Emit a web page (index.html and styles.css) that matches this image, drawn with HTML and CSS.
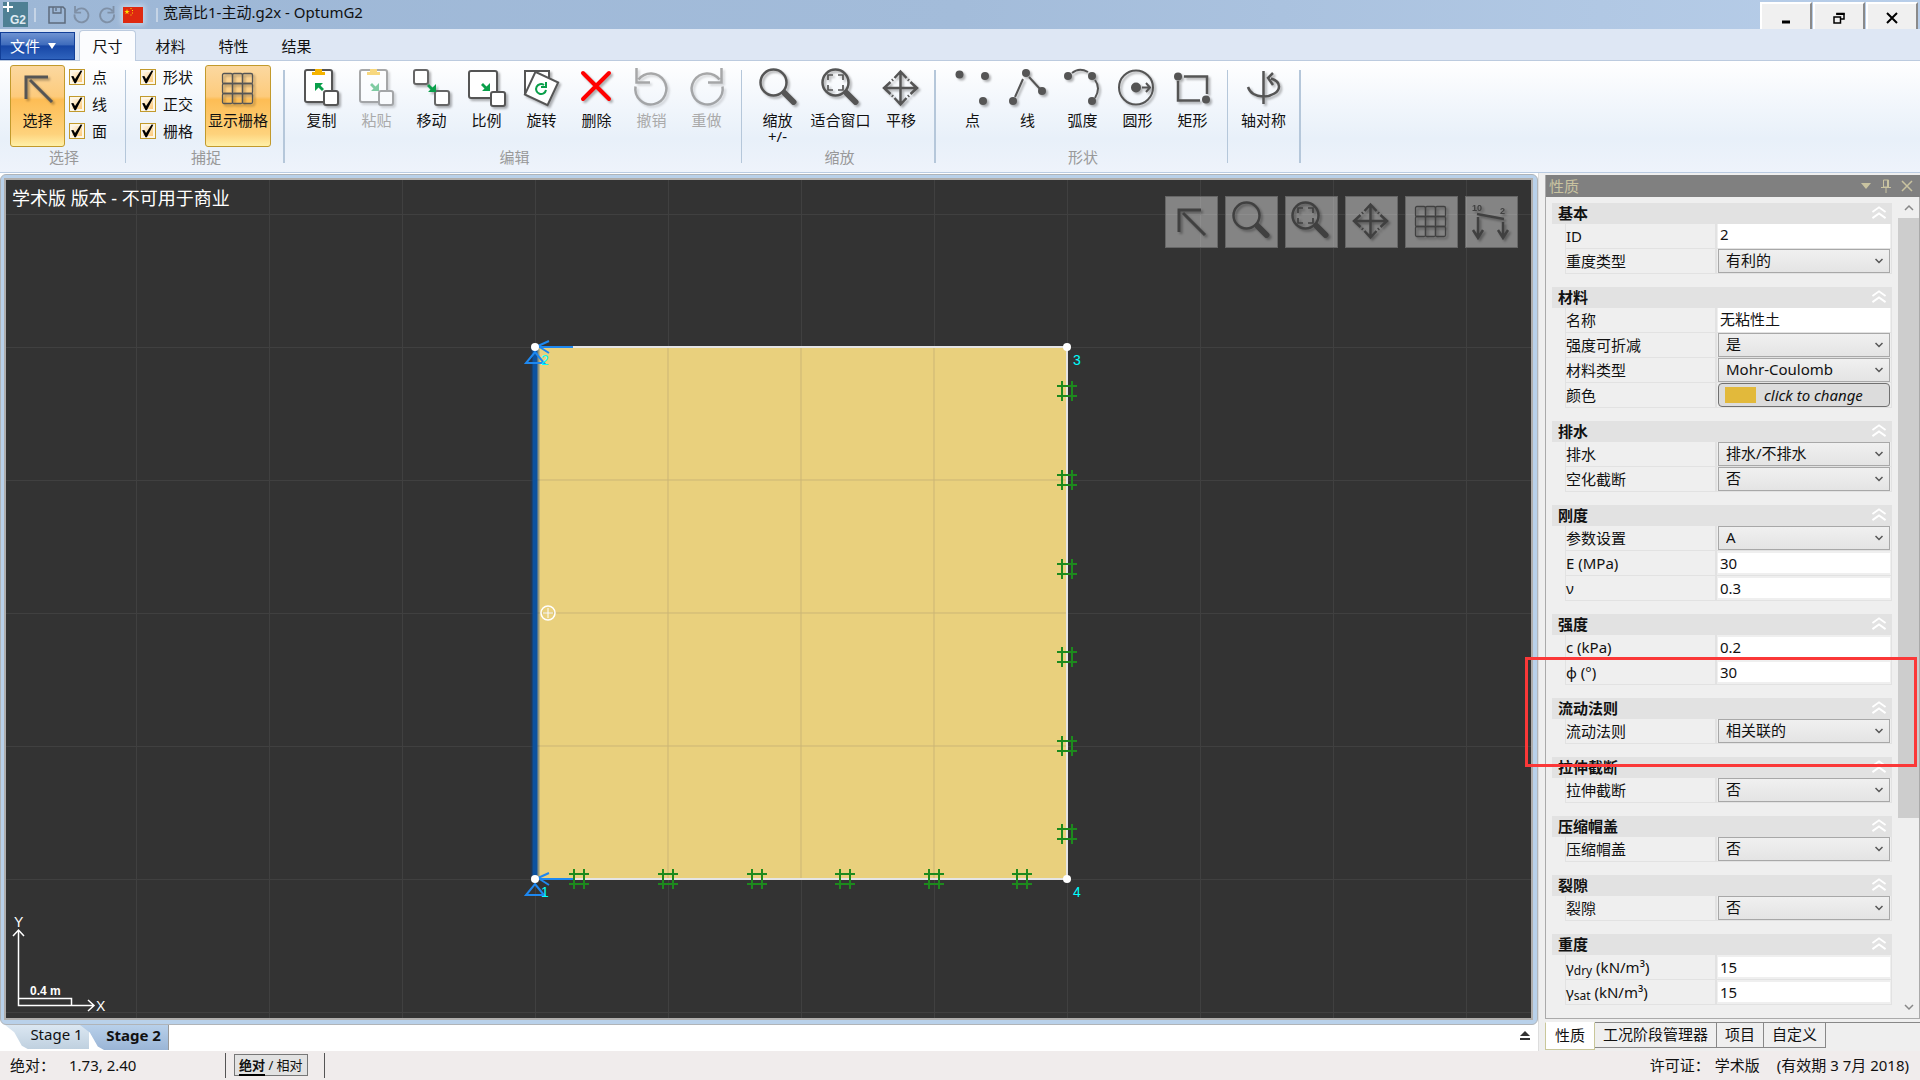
FILE: index.html
```html
<!DOCTYPE html>
<html lang="zh-CN">
<head>
<meta charset="utf-8">
<title>宽高比1-主动.g2x - OptumG2</title>
<link rel="stylesheet" href="styles.css">
</head>
<body>
<svg class="defs" aria-hidden="true">
  <symbol id="i-arrow" viewBox="0 0 40 40"><path d="M8 31V9h22M12 12l22 22" fill="none" stroke="currentColor" stroke-width="3"/></symbol>
  <symbol id="i-grid" viewBox="0 0 40 40"><g fill="none" stroke="currentColor" stroke-width="1.300"><rect x="4.500" y="5.500" width="10" height="10" rx="1.500"/><rect x="14.500" y="5.500" width="10" height="10" rx="1.500"/><rect x="24.500" y="5.500" width="10" height="10" rx="1.500"/><rect x="4.500" y="15.500" width="10" height="10" rx="1.500"/><rect x="14.500" y="15.500" width="10" height="10" rx="1.500"/><rect x="24.500" y="15.500" width="10" height="10" rx="1.500"/><rect x="4.500" y="25.500" width="10" height="10" rx="1.500"/><rect x="14.500" y="25.500" width="10" height="10" rx="1.500"/><rect x="24.500" y="25.500" width="10" height="10" rx="1.500"/></g></symbol>
  <symbol id="i-undo" viewBox="0 0 40 40"><path class="turn" d="M4.500 0v14.500H18M6.500 11.500A15.500 15.500 0 1 1 3.500 18.500"/></symbol>
  <symbol id="i-redo" viewBox="0 0 40 40"><path class="turn" d="M34.500 0v14.500H21M32.500 11.500A15.500 15.500 0 1 0 35.500 18.500"/></symbol>
  <symbol id="i-zoom" viewBox="0 0 40 40"><circle cx="15.500" cy="14.500" r="13" fill="none" stroke="currentColor" stroke-width="2.500"/><path d="M26.500 25l9 9" stroke="currentColor" stroke-width="6" stroke-linecap="round"/></symbol>
  <symbol id="i-fit" viewBox="0 0 40 40"><circle cx="14.500" cy="14.500" r="13" fill="none" stroke="currentColor" stroke-width="2.500"/><path d="M25.500 25l9 9" stroke="currentColor" stroke-width="6" stroke-linecap="round"/><path d="M7 12V7h5M17 7h5v5M22 17v5h-5M12 22H7v-5" fill="none" stroke="currentColor" stroke-width="1.700"/></symbol>
  <symbol id="i-pan" viewBox="0 0 40 40"><path d="M19.500 4v32M3.500 20h32M13.500 10l6-6.500 6 6.500M13.500 30l6 6.500 6-6.500M9.500 14l-6.500 6 6.500 6M29.500 14l6.500 6-6.500 6M11 12.500l1-1M28 12.500l-1-1M11 27.500l1 1M28 27.500l-1 1" fill="none" stroke="currentColor" stroke-width="2.500"/></symbol>
  <symbol id="i-up" viewBox="0 0 16 16"><path d="M1 7.500l7-5 7 5M1 14l7-5 7 5" fill="none" stroke="#fff" stroke-width="2"/></symbol>
  <symbol id="i-down" viewBox="0 0 8 6"><path d="M.5 1L4 4.500 7.500 1" fill="none" stroke="#555" stroke-width="1.500"/></symbol>
</svg>

<div class="app">
  <header class="titlebar">
    <svg class="logo" width="25" height="25" viewBox="0 0 25 25"><rect width="25" height="25" fill="#4f8094"/><path d="M0 5h10M5 0v10" stroke="#fff" stroke-width="2"/><text x="7" y="22" class="logo-text">G2</text></svg>
    <span class="tick"></span>
    <div class="quick">
      <button aria-label="保存"><svg width="18" height="18" viewBox="0 0 18 18" fill="none" stroke="#5d6b7c"><path d="M1 1h14l2 2v14H1z" stroke-width="1.500"/><path d="M5 1v6h8V1M8 2v3" stroke-width="1.300"/></svg></button>
      <button aria-label="撤销"><svg class="mini" width="18" height="18"><use href="#i-undo"/></svg></button>
      <button aria-label="重做"><svg class="mini" width="18" height="18"><use href="#i-redo"/></svg></button>
      <button aria-label="语言" class="flag"><svg width="20" height="16" viewBox="0 0 20 16"><rect width="20" height="16" fill="#de2910"/><path d="M4 2l.7 2h2L5 5.200l.7 2L4 6 2.300 7.200l.7-2L1.300 4h2z" fill="#ffde00"/><path d="M7.500 1.500h1M9 3.500h1M9 6h1M7.500 8h1" stroke="#ffde00"/></svg></button>
    </div>
    <span class="tick"></span>
    <h1>宽高比1-主动.g2x - OptumG2</h1>
    <div class="winbtns">
      <button aria-label="最小化"><svg width="12" height="12"><path d="M2 10h8" stroke="#000" stroke-width="3"/></svg></button>
      <button aria-label="还原"><svg width="12" height="12" fill="none" stroke="#000"><path d="M4 3V1.500h7V7H8" stroke-width="1.500"/><path d="M3.500 2h8" stroke-width="2"/><rect x="1" y="5" width="6.500" height="6" stroke-width="1.500"/></svg></button>
      <button aria-label="关闭"><svg width="12" height="12"><path d="M1 1l10 10M11 1L1 11" stroke="#000" stroke-width="2"/></svg></button>
    </div>
  </header>

  <nav class="tabs">
    <button class="file">文件<svg width="8" height="6"><path d="M0 0h8L4 6z" fill="#fff"/></svg></button>
    <button class="tab active">尺寸</button>
    <button class="tab">材料</button>
    <button class="tab">特性</button>
    <button class="tab">结果</button>
  </nav>

  <div class="ribbon">
    <section class="group g-select">
      <div class="tools">
        <button class="tool on"><svg class="ic"><use href="#i-arrow"/></svg>选择</button>
        <div class="checks">
          <label><input type="checkbox" checked>点</label>
          <label><input type="checkbox" checked>线</label>
          <label><input type="checkbox" checked>面</label>
        </div>
      </div>
      <h2>选择</h2>
    </section>
    <span class="sep"></span>
    <section class="group g-snap">
      <div class="tools">
        <div class="checks">
          <label><input type="checkbox" checked>形状</label>
          <label><input type="checkbox" checked>正交</label>
          <label><input type="checkbox" checked>栅格</label>
        </div>
        <button class="tool wide on"><svg class="ic"><use href="#i-grid"/></svg>显示栅格</button>
      </div>
      <h2>捕捉</h2>
    </section>
    <span class="sep thick"></span>
    <section class="group g-edit">
      <div class="tools">
        <button class="tool"><svg class="ic" viewBox="0 0 40 40"><rect x="3" y="2" width="27" height="32" rx="2" fill="#fff" stroke="#555" stroke-width="2"/><path d="M13 1h7v3h3v3H10V4h3z" fill="#f5b400"/><path d="M13 15h8l-2.500 2.500 3.500 3.500-2 2-3.500-3.500L13 23z" fill="#0a9f4a"/><rect x="22" y="23" width="14" height="14" rx="2" fill="#fff" stroke="#555" stroke-width="2"/></svg>复制</button>
        <button class="tool" disabled><svg class="ic" viewBox="0 0 40 40"><rect x="3" y="2" width="27" height="32" rx="2" fill="#fff" stroke="#555" stroke-width="2"/><path d="M13 1h7v3h3v3H10V4h3z" fill="#f5b400"/><path d="M22 23h-8l2.500-2.500L13 17l2-2 3.500 3.500L22 15z" fill="#0a9f4a"/><rect x="22" y="23" width="14" height="14" rx="2" fill="#fff" stroke="#555" stroke-width="2"/></svg>粘贴</button>
        <button class="tool"><svg class="ic" viewBox="0 0 40 40"><g fill="#fff" stroke="#666" stroke-width="2"><rect x="2" y="2" width="14" height="14" rx="2"/><rect x="23" y="23" width="14" height="14" rx="2"/></g><path d="M24 24h-8l2.500-2.500L15 18l2-2 3.500 3.500L24 16z" fill="#0a9f4a"/></svg>移动</button>
        <button class="tool"><svg class="ic" viewBox="0 0 40 40"><g fill="#fff" stroke="#555" stroke-width="2"><rect x="2" y="3" width="28" height="27" rx="2"/><rect x="24" y="24" width="14" height="14" rx="2"/></g><path d="M23 23h-8l2.500-2.500L14 17l2-2 3.500 3.500L23 15z" fill="#0a9f4a"/></svg>比例</button>
        <button class="tool"><svg class="ic" viewBox="0 0 40 40"><g fill="#fff" stroke="#555" stroke-width="2"><rect x="3" y="3" width="24" height="22"/><rect x="7" y="8" width="25" height="25" transform="rotate(25 19.500 20.500)"/></g><path d="M22 17a5 5 0 1 0 2 5M24 14v5h-5" fill="none" stroke="#0a9f4a" stroke-width="2"/></svg>旋转</button>
        <button class="tool"><svg class="ic" viewBox="0 0 40 40"><path d="M6 5l26 26M32 5L6 31" stroke="#f00" stroke-width="4" stroke-linecap="round"/></svg>删除</button>
        <button class="tool" disabled><svg class="ic"><use href="#i-undo"/></svg>撤销</button>
        <button class="tool" disabled><svg class="ic"><use href="#i-redo"/></svg>重做</button>
      </div>
      <h2>编辑</h2>
    </section>
    <span class="sep"></span>
    <section class="group g-zoom">
      <div class="tools">
        <button class="tool mid"><svg class="ic"><use href="#i-zoom"/></svg><span>缩放</span><span>+/-</span></button>
        <button class="tool wide"><svg class="ic"><use href="#i-fit"/></svg>适合窗口</button>
        <button class="tool"><svg class="ic"><use href="#i-pan"/></svg>平移</button>
      </div>
      <h2>缩放</h2>
    </section>
    <span class="sep thick"></span>
    <section class="group g-shape">
      <div class="tools">
        <button class="tool"><svg class="ic" viewBox="0 0 40 40" fill="currentColor"><circle cx="6.500" cy="6.500" r="4"/><circle cx="32" cy="8" r="4"/><circle cx="30" cy="33" r="4"/></svg>点</button>
        <button class="tool"><svg class="ic" viewBox="0 0 40 40" fill="currentColor"><circle cx="18" cy="5" r="4"/><circle cx="5" cy="33" r="4"/><circle cx="34" cy="23" r="4"/><path d="M15 11L7 29M21 9l11 12" stroke="currentColor" stroke-width="2"/></svg>线</button>
        <button class="tool"><svg class="ic" viewBox="0 0 40 40" fill="currentColor"><circle cx="5" cy="8" r="4"/><circle cx="29" cy="8" r="4"/><circle cx="29" cy="33" r="4"/><path d="M9 5Q16-1 25 4M32 12q6 8 0 18" fill="none" stroke="currentColor" stroke-width="2"/></svg>弧度</button>
        <button class="tool"><svg class="ic" viewBox="0 0 40 40"><circle cx="18" cy="19.500" r="17" fill="none" stroke="currentColor" stroke-width="2"/><circle cx="18" cy="19.500" r="5" fill="currentColor"/><path d="M24 19.500h8M28 15l4 4.500-4 4.500" fill="none" stroke="currentColor" stroke-width="2"/></svg>圆形</button>
        <button class="tool"><svg class="ic" viewBox="0 0 40 40"><path d="M11 8.500h23V26M27 32.500H5V13" fill="none" stroke="currentColor" stroke-width="2.500"/><g fill="currentColor"><circle cx="5" cy="8.500" r="4"/><circle cx="33" cy="31.500" r="4"/></g></svg>矩形</button>
      </div>
      <h2>形状</h2>
    </section>
    <span class="sep"></span>
    <section class="group g-axis">
      <div class="tools">
        <button class="tool"><svg class="ic" viewBox="0 0 40 40"><path d="M19.500 3v33M4 19c2 6 8 9.500 15 9.500 9 0 16-4.500 16-10 0-4-3-6.500-8-8M29 5l-5 5 5 7" fill="none" stroke="currentColor" stroke-width="2.500"/></svg>轴对称</button>
      </div>
    </section>
    <span class="sep thick"></span>
  </div>

  <main class="work">
    <div class="left">
      <div class="frame">
        <div class="canvas">
          <svg class="model" width="100%" height="100%">
            <defs>
              <pattern id="grid" width="133" height="133" patternUnits="userSpaceOnUse" x="529" y="167"><path d="M0 .5h133M.5 0v133" stroke="#404040"/></pattern>
              <g id="hash"><path d="M-10-5h20M-10 5h20M-5-10v20M5-10v20" stroke="#1d8a1d" stroke-width="2"/></g>
              <g id="support" fill="none" stroke="#1e88f0" stroke-width="2"><path d="M0 5l9 11H-9z"/><path d="M4 0h34" /><path d="M14-6L3-1l11 7"/></g>
            </defs>
            <rect width="100%" height="100%" fill="url(#grid)"/>
            <g transform="translate(529 167)">
              <rect width="532" height="532" fill="#e9d07d"/>
              <path d="M133 0v532M266 0v532M399 0v532M0 133h532M0 266h532M0 399h532" stroke="#cbb577"/>
              <path d="M0 0h532v532H0" fill="none" stroke="#e4e4e4" stroke-width="2"/>
              <path d="M0 0v532" stroke="#0b3c7c" stroke-opacity=".4" stroke-width="9"/>
              <path d="M0 0v532" stroke="#0c529f" stroke-width="5"/>
              <use href="#hash" x="44" y="532"/><use href="#hash" x="133" y="532"/><use href="#hash" x="222" y="532"/><use href="#hash" x="310" y="532"/><use href="#hash" x="399" y="532"/><use href="#hash" x="487" y="532"/>
              <use href="#hash" x="532" y="44"/><use href="#hash" x="532" y="133"/><use href="#hash" x="532" y="222"/><use href="#hash" x="532" y="310"/><use href="#hash" x="532" y="399"/><use href="#hash" x="532" y="487"/>
              <use href="#support"/><use href="#support" y="532"/>
              <g fill="#fff"><circle r="4"/><circle cx="532" r="4"/><circle cy="532" r="4"/><circle cx="532" cy="532" r="4"/></g>
              <g class="node"><text x="6" y="18">2</text><text x="6" y="550">1</text><text x="538" y="18">3</text><text x="538" y="550">4</text></g>
              <g fill="none" stroke="#fff" stroke-width="1.500"><circle cx="13" cy="266" r="7"/><path d="M8 266h10M13 261v10" stroke-width="1"/></g>
            </g>
          </svg>
          <p class="licence">学术版 版本 - 不可用于商业</p>
          <svg class="axes" width="112" height="104" fill="none" stroke="#fff">
            <path d="M12.500 18v74.500H88M7 23l5.500-6 5.500 6M82 87l6 5.500-6 5.500" stroke-width="1.500"/>
            <path d="M12 85.500h53.500V92" stroke-width="1.500"/>
            <g class="axis-text"><text x="8" y="14">Y</text><text x="90" y="98">X</text><text class="scale" x="24" y="82">0.4 m</text></g>
          </svg>
          <div class="float">
            <button aria-label="选择"><svg class="ic"><use href="#i-arrow"/></svg></button>
            <button aria-label="缩放"><svg class="ic"><use href="#i-zoom"/></svg></button>
            <button aria-label="适合窗口"><svg class="ic"><use href="#i-fit"/></svg></button>
            <button aria-label="平移"><svg class="ic"><use href="#i-pan"/></svg></button>
            <button aria-label="栅格"><svg class="ic"><use href="#i-grid"/></svg></button>
            <button aria-label="荷载"><svg class="ic" viewBox="0 0 40 40"><path d="M6 13l27 5M7 16v20M2 29l5 8 5-8M32 21v15M27 29l5 8 5-8" fill="none" stroke="currentColor" stroke-width="2.500"/><g class="load"><text x="1" y="10">10</text><text x="29" y="13">2</text></g></svg></button>
          </div>
        </div>
      </div>
      <div class="stages">
        <button class="stage"><span>Stage 1</span></button>
        <button class="stage current"><span>Stage 2</span></button>
        <button class="eject" aria-label="展开"><svg width="12" height="12"><path d="M1 6l5-5 5 5z" fill="#333"/><path d="M1 9h10" stroke="#333" stroke-width="2"/></svg></button>
      </div>
    </div>

    <aside class="side">
      <header class="side-head">
        <h2>性质</h2>
        <button aria-label="菜单"><svg width="10" height="6"><path d="M0 0h10L5 6z" fill="#c9c3a0"/></svg></button>
        <button aria-label="固定"><svg width="10" height="14" fill="none" stroke="#c9c3a0"><path d="M2.500 1h5v7h-5zM6.500 1v7M0 8.500h10M5 9v5"/></svg></button>
        <button aria-label="关闭面板"><svg width="12" height="12"><path d="M1 1l10 10M11 1L1 11" stroke="#c9c3a0" stroke-width="1.500"/></svg></button>
      </header>
      <div class="side-body">
        <form class="props">
          <fieldset><h3>基本<svg><use href="#i-up"/></svg></h3>
            <div class="row"><label for="p1">ID</label><input id="p1" class="tall" value="2"></div>
            <div class="row"><label for="p2">重度类型</label><span class="pick"><select id="p2"><option>有利的</option></select><svg><use href="#i-down"/></svg></span></div>
          </fieldset>
          <fieldset><h3>材料<svg><use href="#i-up"/></svg></h3>
            <div class="row"><label for="p3">名称</label><input id="p3" class="tall" value="无粘性土"></div>
            <div class="row"><label for="p4">强度可折减</label><span class="pick"><select id="p4"><option>是</option></select><svg><use href="#i-down"/></svg></span></div>
            <div class="row"><label for="p5">材料类型</label><span class="pick"><select id="p5"><option>Mohr-Coulomb</option></select><svg><use href="#i-down"/></svg></span></div>
            <div class="row"><label for="p6">颜色</label><button type="button" id="p6" class="colour"><i></i>click to change</button></div>
          </fieldset>
          <fieldset><h3>排水<svg><use href="#i-up"/></svg></h3>
            <div class="row"><label for="p7">排水</label><span class="pick"><select id="p7"><option>排水/不排水</option></select><svg><use href="#i-down"/></svg></span></div>
            <div class="row"><label for="p8">空化截断</label><span class="pick"><select id="p8"><option>否</option></select><svg><use href="#i-down"/></svg></span></div>
          </fieldset>
          <fieldset><h3>刚度<svg><use href="#i-up"/></svg></h3>
            <div class="row"><label for="p9">参数设置</label><span class="pick"><select id="p9"><option>A</option></select><svg><use href="#i-down"/></svg></span></div>
            <div class="row"><label for="p10">E (MPa)</label><input id="p10" value="30"></div>
            <div class="row"><label for="p11">ν</label><input id="p11" value="0.3"></div>
          </fieldset>
          <fieldset><h3>强度<svg><use href="#i-up"/></svg></h3>
            <div class="row"><label for="p12">c (kPa)</label><input id="p12" value="0.2"></div>
            <div class="row"><label for="p13">ϕ (°)</label><input id="p13" value="30"></div>
          </fieldset>
          <fieldset><h3>流动法则<svg><use href="#i-up"/></svg></h3>
            <div class="row"><label for="p14">流动法则</label><span class="pick"><select id="p14"><option>相关联的</option></select><svg><use href="#i-down"/></svg></span></div>
          </fieldset>
          <fieldset><h3>拉伸截断<svg><use href="#i-up"/></svg></h3>
            <div class="row"><label for="p15">拉伸截断</label><span class="pick"><select id="p15"><option>否</option></select><svg><use href="#i-down"/></svg></span></div>
          </fieldset>
          <fieldset><h3>压缩帽盖<svg><use href="#i-up"/></svg></h3>
            <div class="row"><label for="p16">压缩帽盖</label><span class="pick"><select id="p16"><option>否</option></select><svg><use href="#i-down"/></svg></span></div>
          </fieldset>
          <fieldset><h3>裂隙<svg><use href="#i-up"/></svg></h3>
            <div class="row"><label for="p17">裂隙</label><span class="pick"><select id="p17"><option>否</option></select><svg><use href="#i-down"/></svg></span></div>
          </fieldset>
          <fieldset><h3>重度<svg><use href="#i-up"/></svg></h3>
            <div class="row"><label for="p18">γ<sub>dry</sub> (kN/m³)</label><input id="p18" value="15"></div>
            <div class="row"><label for="p19">γ<sub>sat</sub> (kN/m³)</label><input id="p19" value="15"></div>
          </fieldset>
        </form>
        <div class="scroll">
          <svg width="10" height="7"><path d="M1 6l4-4 4 4" fill="none" stroke="#888" stroke-width="1.500"/></svg>
          <div class="track"><div class="thumb"></div></div>
          <svg width="10" height="7"><path d="M1 1l4 4 4-4" fill="none" stroke="#888" stroke-width="1.500"/></svg>
        </div>
      </div>
      <nav class="side-tabs">
        <button class="active">性质</button>
        <button>工况阶段管理器</button>
        <button>项目</button>
        <button>自定义</button>
      </nav>
    </aside>
    <div class="mark"></div>
  </main>

  <footer class="status">
    <span class="pos">绝对：</span>
    <span class="coords">1.73, 2.40</span>
    <span class="bar"></span>
    <button><b>绝对</b> / 相对</button>
    <span class="bar"></span>
    <span class="lic">许可证：</span>
    <span class="edition">学术版</span>
    <span>(有效期 3 7月 2018)</span>
  </footer>
</div>
</body>
</html>
```
FILE: styles.css
```css
* { box-sizing: border-box; }
body {
  margin: 0;
  font: 15px/18px "Noto Sans", "Noto Sans CJK SC", sans-serif;
  color: #111;
}
button, input, select { font: inherit; color: inherit; margin: 0; }
button { padding: 0; border: 0; background: none; }
h1, h2, h3, p { margin: 0; font-size: inherit; font-weight: 400; }
svg { display: block; flex: none; }
.defs { position: absolute; width: 0; height: 0; }
.turn { fill: none; stroke: currentColor; stroke-width: var(--turn, 2.5); }

.app {
  display: grid;
  grid-template-rows: auto auto auto 1fr auto;
  min-height: 100vh;
  background: #efefef;
}

/* title bar */
.titlebar {
  display: flex;
  align-items: center;
  height: 29px;
  padding-left: 3px;
  background: linear-gradient(90deg, #9db7d6, #a3bcda 50%, #b8cee9);
}
.logo-text { font: bold 12px "Liberation Sans", sans-serif; fill: #dfeaf2; }
.tick { width: 2px; height: 14px; margin-left: 6px; background: #c5d4e6; }
.quick { display: flex; align-items: center; gap: 7px; margin: 0 13px 0 12px; }
.quick + .tick { margin-left: 0; }
.mini { color: #7f90a6; --turn: 4; }
.flag { box-shadow: 0 0 5px 2px #c5d6e8; }
.titlebar h1 { flex: 1; padding-left: 5px; line-height: 24px; align-self: flex-start; }
.winbtns { display: flex; align-self: flex-end; gap: 1px; padding-right: 2px; }
.winbtns button {
  display: grid;
  place-items: center;
  width: 52px;
  height: 27px;
  padding-top: 2px;
  background: #f0f0f0;
  border: 2px solid #fff;
  border-right-color: #8a8a8a;
  border-bottom: 0;
}

/* ribbon tabs */
.tabs {
  display: flex;
  align-items: flex-end;
  height: 32px;
  background: #dee7f4;
  border-bottom: 1px solid #bccbdf;
}
.file {
  display: flex;
  align-items: center;
  gap: 8px;
  width: 75px;
  height: 28px;
  padding-left: 9px;
  margin-right: 4px;
  color: #fff;
  background: linear-gradient(#6f93d2, #3f6cbc 45%, #1747a6 50%, #2f63bd);
  border: 1px solid #123f98;
}
.tab { width: 63px; height: 29px; }
.tab.active {
  width: 57px;
  height: 31px;
  margin: 0 3px -1px 0;
  background: #fbfcfe;
  border: 1px solid #bccbdf;
  border-bottom: 0;
  border-radius: 4px 4px 0 0;
}

/* ribbon */
.ribbon {
  display: flex;
  height: 112px;
  background: linear-gradient(#fff, #f3f7fc 35%, #e8f0f9 70%, #eef3fb);
  border-bottom: 1px solid #b9cbe2;
}
.sep { width: 1px; height: 93px; margin-top: 9px; background: #b5c7da; }
.sep.thick { width: 2px; }
.group { display: flex; flex-direction: column; padding-top: 4px; text-align: center; }
.group h2 { margin-top: 1px; padding-left: 3px; color: #999; }
.tools { display: flex; justify-content: center; height: 82px; }
.g-select { width: 125px; }
.g-select .tools { justify-content: flex-start; gap: 4px; padding-left: 10px; }
.g-snap { width: 157px; }
.g-snap .tools { justify-content: space-between; padding: 0 12px 0 14px; }
.g-edit { width: 456px; }
.g-edit .tools { padding-left: 2px; }
.g-zoom { width: 192px; }
.g-shape { width: 291px; }
.g-shape .tools { padding-left: 2px; }
.g-axis { width: 71px; }
.tool {
  display: flex;
  flex-direction: column;
  align-items: center;
  width: 55px;
  padding-top: 3px;
  line-height: 16px;
  white-space: nowrap;
  border-radius: 3px;
}
.tool.mid { width: 60px; }
.tool.wide { width: 66px; }
.ic {
  width: 40px;
  height: 40px;
  color: #555;
  filter: drop-shadow(2px 2px 1px rgba(0, 0, 0, .3));
}
.tool .ic { margin-bottom: 4px; }
.tool:disabled { color: #aaa; }
.tool:disabled .ic { opacity: .5; }
.tool.on {
  padding-top: 2px;
  background: linear-gradient(#fbd8a0, #fdcb7c 38%, #fdbd55 42%, #fed27c 85%, #fff0a8);
  border: 1px solid #c29a2c;
}
.checks { display: flex; flex-direction: column; gap: 11px; padding-top: 4px; }
.checks label { display: flex; align-items: center; gap: 7px; height: 16px; }
.checks input {
  appearance: none;
  width: 16px;
  height: 16px;
  background: linear-gradient(135deg, #fff, #fcd9a0 60%, #fdc064);
  border: 1px solid #c29a2c;
  box-shadow: inset 0 0 0 2px #fdf6e6;
}
.checks input::before {
  content: "";
  display: block;
  width: 14px;
  height: 14px;
  background: #000;
  clip-path: polygon(8% 45%, 24% 42%, 36% 64%, 76% 4%, 88% 6%, 42% 94%, 32% 94%);
}

/* work area */
.work {
  position: relative;
  display: grid;
  grid-template-columns: 1fr 375px;
  gap: 7px;
  min-height: 877px;
}
.left { display: flex; flex-direction: column; padding-top: 1px; background: #fff; border-right: 1px solid #ddd; margin-right: -1px; }
.frame {
  display: flex;
  flex: 1;
  padding: 3px 4px 4px 3px;
  background: #b9d1ea;
  border: 1px solid #b0b4b8;
  border-radius: 6px;
}
.canvas {
  position: relative;
  flex: 1;
  background: #333;
  outline: 2px solid #b0aeac;
  margin: 2px;
  overflow: hidden;
}
.model { position: absolute; inset: 0; }
.node text { font: 14px "Liberation Sans", sans-serif; fill: #0ff; }
.licence { position: absolute; left: 6px; top: 6px; font-size: 18px; line-height: 24px; color: #fff; }
.axes { position: absolute; left: 0; bottom: 1px; }
.axis-text { font: 14px "Liberation Sans", sans-serif; fill: #fff; stroke: none; }
.scale { font-size: 12px; font-weight: bold; }
.float { position: absolute; top: 16px; right: 13px; display: flex; gap: 7px; }
.float button {
  display: grid;
  place-items: center;
  width: 53px;
  height: 52px;
  padding: 0 2px 2px 0;
  background: rgba(255, 255, 255, .4);
  border: 1px solid #666;
}
.float .ic { color: #404040; }
.load text { font: bold 9px "Liberation Sans", sans-serif; fill: #404040; }

.stages { display: flex; height: 26px; align-items: flex-start; padding: 0 7px 0 5px; }
.stage {
  width: 84px;
  height: 24px;
  padding: 0 0 6px 19px;
  background: linear-gradient(#dbe7f2, #bfd0df);
  clip-path: polygon(0 0, 100% 0, 100% 100%, 27% 100%, 20% 86%, 11% 30%);
}
.stage.current {
  width: 89px;
  height: 25px;
  margin-left: -9px;
  font-weight: bold;
  background: linear-gradient(#b8d0ea, #9ab5d6);
  border-right: 1px solid #999;
}
.eject { margin: 5px 0 0 auto; }

/* property panel */
.side { display: flex; flex-direction: column; padding-top: 2px; min-width: 0; }
.side-head {
  display: flex;
  align-items: center;
  gap: 10px;
  height: 22px;
  padding: 0 7px 1px 3px;
  color: #c9c3a0;
  background: #808080;
  border-left: 1px solid #aaa;
}
.side-head h2 { flex: 1; }
.side-body {
  display: flex;
  flex: 1;
  padding-left: 6px;
  border: 1px solid #aaa;
  border-top: 0;
}
.props { flex: 1; padding-top: 6px; }
fieldset { min-width: 0; margin: 0 0 13px; padding: 0; border: 0; }
.props h3 {
  display: flex;
  justify-content: space-between;
  align-items: center;
  height: 21px;
  padding: 0 5px 2px 6px;
  font-weight: bold;
  background: #e2e2e2;
}
.props h3 svg { width: 16px; height: 15px; }
.row {
  display: grid;
  grid-template-columns: 152px 1fr;
  align-items: center;
  height: 25px;
  margin-left: 13px;
  padding-right: 1px;
  border: 1px solid #e2e2e2;
  border-top: 0;
}
.row label { height: 24px; line-height: 24px; border-right: 2px solid #e2e2e2; margin-right: 1px; white-space: nowrap; }
.row sub { font-size: 12px; line-height: 0; vertical-align: -2px; }
.row input {
  width: 100%;
  min-width: 0;
  height: 20px;
  padding: 0 2px;
  background: #fff;
  border: 0;
  border-radius: 0;
}
.row input.tall { height: 24px; padding-bottom: 4px; }
.pick { display: grid; align-items: center; }
.pick select, .pick svg { grid-area: 1 / 1; }
.pick select {
  appearance: none;
  width: 100%;
  height: 24px;
  padding: 0 20px 2px 7px;
  background: linear-gradient(#f0f0f0, #e4e4e4);
  border: 1px solid #a8a8a8;
  border-radius: 0;
}
.pick svg { width: 8px; height: 6px; margin-right: 7px; justify-self: end; pointer-events: none; }
.colour {
  display: flex;
  align-items: center;
  gap: 8px;
  height: 24px;
  padding: 0 0 1px 6px;
  font-style: italic;
  background: #dcdcdc;
  border: 1px solid #707070;
  border-radius: 4px;
}
.colour i { width: 31px; height: 16px; background: #e2b93b; }
.scroll {
  display: flex;
  flex-direction: column;
  align-items: center;
  width: 21px;
  margin-left: 6px;
  padding: 7px 0;
}
.track { flex: 1; align-self: stretch; margin: 7px 0; }
.thumb { height: 77%; background: #cdcdcd; }
.side-tabs { display: flex; height: 32px; padding-top: 3px; }
.side-tabs::after { content: ""; flex: 1; border-top: 1px solid #888; }
.side-tabs button {
  height: 26px;
  padding: 0 8px 3px;
  border: 1px solid #888;
  border-left: 0;
}
.side-tabs .active { height: 28px; width: 50px; background: #fff; border: 1px solid #c9c79a; border-top-color: #fff; }
.mark {
  position: absolute;
  top: 484px;
  right: 3px;
  width: 392px;
  height: 110px;
  border: 3px solid #fb3838;
  pointer-events: none;
}

/* status bar */
.status {
  display: flex;
  align-items: center;
  height: 30px;
  padding: 0 11px 2px 10px;
  background: #f0ecec;
}
.pos { width: 59px; }
.coords { width: 156px; }
.bar { width: 1px; height: 25px; background: #555; }
.status button {
  height: 22px;
  margin: 0 16px 0 8px;
  padding: 0 4px;
  font-size: 13px;
  line-height: 16px;
  background: #e2e2e2;
  border: 1px solid #777;
}
.status b { border-bottom: 2px solid #000; }
.lic { margin-left: auto; width: 65px; }
.edition { width: 62px; }
```
